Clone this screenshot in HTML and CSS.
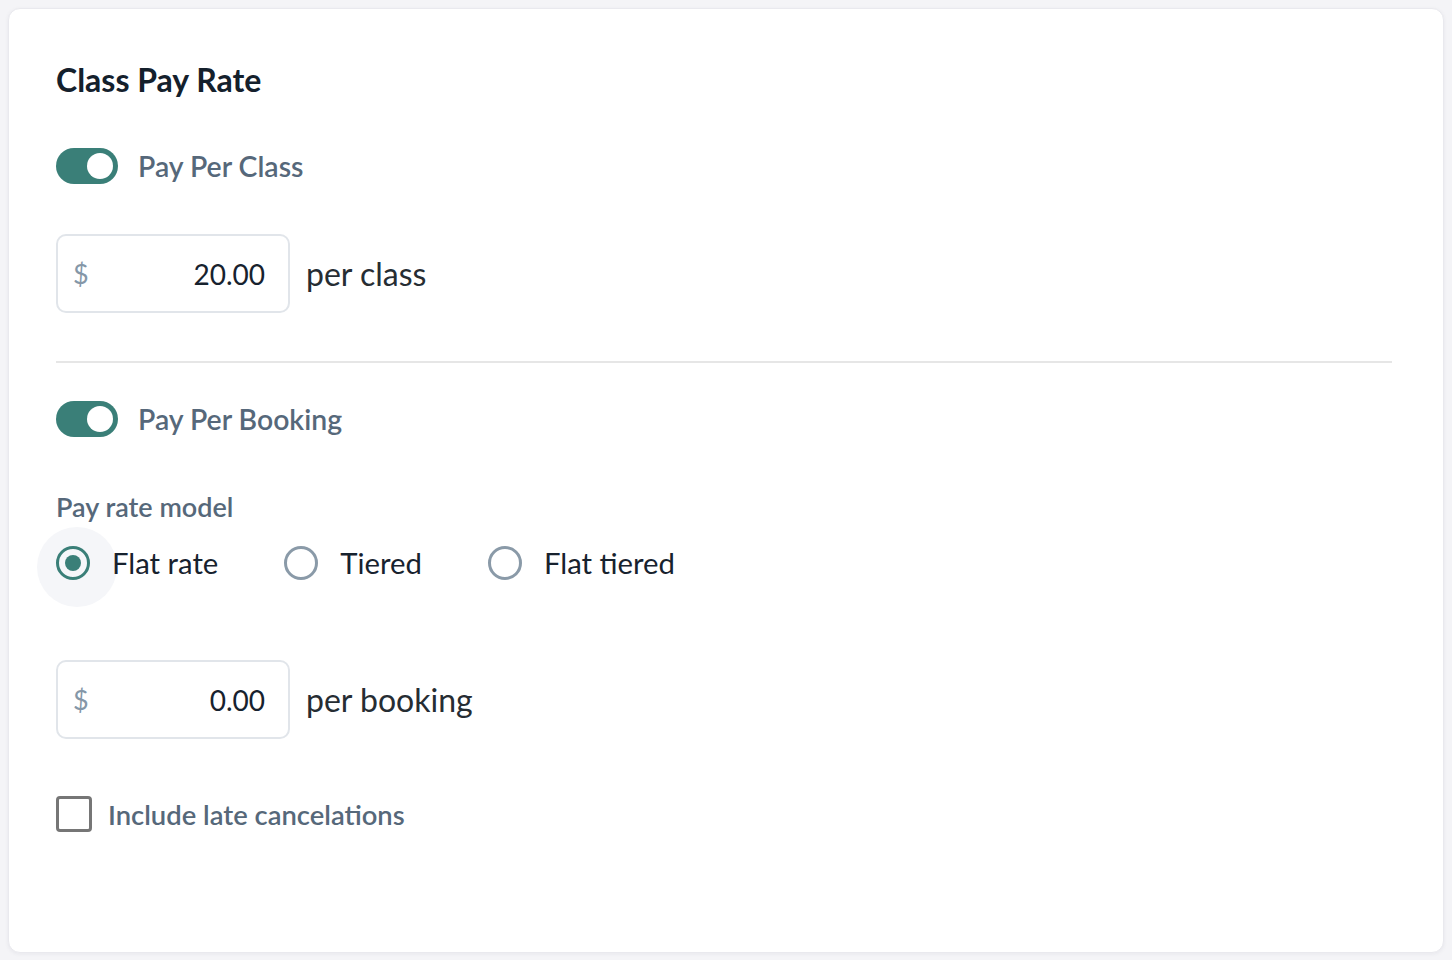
FILE: index.html
```html
<!DOCTYPE html>
<html lang="en">
<head>
<meta charset="utf-8">
<title>Class Pay Rate</title>
<link rel="stylesheet" href="styles.css">
</head>
<body>
<div class="card">
  <h2 class="title">Class Pay Rate</h2>

  <div class="toggle-row first">
    <span class="switch"><span class="knob"></span></span>
    <span class="toggle-label">Pay Per Class</span>
  </div>

  <div class="amount-row class-amount">
    <div class="amount-input">
      <span class="currency">$</span>
      <span class="value">20.00</span>
    </div>
    <span class="unit">per class</span>
  </div>

  <hr class="divider">

  <div class="toggle-row second">
    <span class="switch"><span class="knob"></span></span>
    <span class="toggle-label">Pay Per Booking</span>
  </div>

  <div class="model-label">Pay rate model</div>

  <div class="radio-group">
    <label class="radio checked">
      <span class="radio-wrap">
        <span class="halo"></span>
        <span class="radio-circle"><span class="dot"></span></span>
      </span>
      <span class="radio-text">Flat rate</span>
    </label>
    <label class="radio">
      <span class="radio-wrap">
        <span class="radio-circle"></span>
      </span>
      <span class="radio-text">Tiered</span>
    </label>
    <label class="radio">
      <span class="radio-wrap">
        <span class="radio-circle"></span>
      </span>
      <span class="radio-text">Flat tiered</span>
    </label>
  </div>

  <div class="amount-row booking-amount">
    <div class="amount-input">
      <span class="currency">$</span>
      <span class="value">0.00</span>
    </div>
    <span class="unit">per booking</span>
  </div>

  <label class="check-row">
    <span class="checkbox"></span>
    <span class="check-label">Include late cancelations</span>
  </label>
</div>
</body>
</html>
```

FILE: styles.css
```css
* { box-sizing: border-box; }

html, body {
  margin: 0;
  height: 960px;
  background: #f4f4f7;
  font-family: Lato, "Noto Sans", sans-serif;
}

body {
  padding: 8px 8px 0 8px;
}

.card {
  height: 945px;
  background: #ffffff;
  border: 1px solid #e9e9ee;
  border-radius: 12px;
  box-shadow: 0 1px 4px rgba(30, 30, 60, 0.06);
  padding: 51px 51px 0 47px;
  display: flex;
  flex-direction: column;
}

.title {
  margin: 0;
  font-size: 32px;
  line-height: 40px;
  font-weight: 700;
  color: #14202c;
}

.toggle-row {
  display: flex;
  align-items: center;
  gap: 20px;
  height: 36px;
}

.toggle-row.first { margin-top: 48px; }
.toggle-row.second { margin-top: 38px; }

.switch {
  position: relative;
  width: 62px;
  height: 36px;
  border-radius: 18px;
  background: #3a7f78;
  flex: none;
}

.knob {
  position: absolute;
  top: 5px;
  right: 5px;
  width: 26px;
  height: 26px;
  border-radius: 50%;
  background: #ffffff;
}

.toggle-label {
  font-size: 28.4px;
  font-weight: 600;
  color: #56687a;
}

.amount-row {
  display: flex;
  align-items: center;
  gap: 16px;
}

.class-amount { margin-top: 50px; }
.booking-amount { margin-top: 80px; }

.amount-input {
  width: 234px;
  height: 79px;
  border: 2px solid #e1e5ea;
  border-radius: 10px;
  display: flex;
  align-items: center;
  justify-content: space-between;
  padding: 0 23px 0 15px;
}

.currency {
  font-size: 27px;
  color: #8597a8;
}

.value {
  font-size: 28px;
  color: #17222e;
}

.unit {
  font-size: 32px;
  color: #262d33;
}

.divider {
  margin: 48px 0 0 0;
  border: 0;
  border-top: 2px solid #e6e6e6;
  height: 0;
}

.model-label {
  margin-top: 54px;
  font-size: 27px;
  line-height: 32px;
  font-weight: 600;
  color: #56687a;
}

.radio-group {
  margin-top: 22px;
  display: flex;
  align-items: center;
  gap: 66px;
}

.radio {
  position: relative;
  isolation: isolate;
  display: flex;
  align-items: center;
  gap: 22px;
}

.radio-wrap {
  position: relative;
  width: 34px;
  height: 34px;
  flex: none;
}

.halo {
  position: absolute;
  z-index: -1;
  left: -19px;
  top: -19px;
  width: 80px;
  height: 80px;
  border-radius: 50%;
  background: #f5f6f9;
}

.radio-circle {
  position: relative;
  width: 34px;
  height: 34px;
  border: 3px solid #8a9aa8;
  border-radius: 50%;
  display: flex;
  align-items: center;
  justify-content: center;
}

.radio.checked .radio-circle {
  border-color: #3a7f78;
}

.dot {
  width: 16px;
  height: 16px;
  border-radius: 50%;
  background: #3a7f78;
}

.radio-text {
  font-size: 29.3px;
  color: #17222e;
}

.check-row {
  margin-top: 57px;
  display: flex;
  align-items: center;
  gap: 16px;
}

.checkbox {
  width: 36px;
  height: 36px;
  border: 3px solid #767676;
  border-radius: 4px;
  flex: none;
}

.check-label {
  font-size: 27.4px;
  font-weight: 600;
  color: #56687a;
}
```
